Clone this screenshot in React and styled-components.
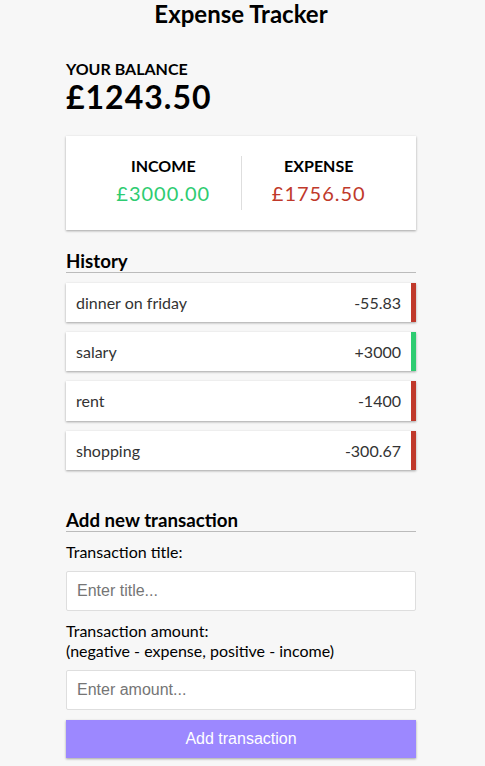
import React from 'react';
import styled, { createGlobalStyle } from 'styled-components';

const shadow = '0 1px 3px rgba(0, 0, 0, 0.12), 0 1px 2px rgba(0, 0, 0, 0.24)';

const GlobalStyle = createGlobalStyle`
  * {
    box-sizing: border-box;
  }
  body {
    margin: 0;
    padding: 0 3px 0 0;
    background-color: #f7f7f7;
    font-family: Lato, 'Noto Sans', sans-serif;
    color: #000;
  }
`;

const transactions = [
  { id: 1, text: 'dinner on friday', amount: '-55.83', plus: false },
  { id: 2, text: 'salary', amount: '+3000', plus: true },
  { id: 3, text: 'rent', amount: '-1400', plus: false },
  { id: 4, text: 'shopping', amount: '-300.67', plus: false },
];

const App = () => (
  <Page>
    <GlobalStyle />
    <Title>Expense Tracker</Title>
    <Container>
      <SmallHeading>Your Balance</SmallHeading>
      <Balance>£1243.50</Balance>

      <IncExp>
        <IncExpCol>
          <SmallHeading>Income</SmallHeading>
          <Money plus>£3000.00</Money>
        </IncExpCol>
        <IncExpCol>
          <SmallHeading>Expense</SmallHeading>
          <Money>£1756.50</Money>
        </IncExpCol>
      </IncExp>

      <SectionHeading>History</SectionHeading>
      <List>
        {transactions.map((t) => (
          <Item key={t.id} plus={t.plus}>
            {t.text}
            <span>{t.amount}</span>
          </Item>
        ))}
      </List>

      <SectionHeading>Add new transaction</SectionHeading>
      <form onSubmit={(e) => e.preventDefault()}>
        <FormControl>
          <Label htmlFor="text">Transaction title:</Label>
          <Input type="text" id="text" placeholder="Enter title..." />
        </FormControl>
        <FormControl>
          <Label htmlFor="amount">
            Transaction amount:
            <br />
            (negative - expense, positive - income)
          </Label>
          <Input type="number" id="amount" placeholder="Enter amount..." />
        </FormControl>
        <Button type="submit">Add transaction</Button>
      </form>
    </Container>
  </Page>
);

export default App;

const Page = styled.div`
  display: flex;
  flex-direction: column;
  align-items: center;
`;

const Title = styled.h2`
  margin: 0;
  font-size: 24px;
  line-height: 1.2;
  font-weight: 700;
`;

const Container = styled.div`
  width: 350px;
  margin: 30px auto 30px;
`;

const SmallHeading = styled.h4`
  margin: 0;
  font-size: 16px;
  font-weight: 700;
  line-height: 1.2;
  text-transform: uppercase;
`;

const Balance = styled.h1`
  margin: 0;
  font-size: 32px;
  font-weight: 700;
  line-height: 1.2;
  letter-spacing: 1px;
`;

const IncExp = styled.div`
  background-color: #fff;
  box-shadow: ${shadow};
  padding: 20px;
  display: flex;
  justify-content: space-between;
  margin: 20px 0;
`;

const IncExpCol = styled.div`
  flex: 1;
  text-align: center;

  &:first-of-type {
    border-right: 1px solid #dedede;
  }
`;

const Money = styled.p`
  font-size: 20px;
  letter-spacing: 1px;
  line-height: 1.2;
  margin: 5px 0;
  color: ${(p) => (p.plus ? '#2ecc71' : '#c0392b')};
`;

const SectionHeading = styled.h3`
  font-size: 18.72px;
  font-weight: 700;
  line-height: 1.2;
  border-bottom: 1px solid #bbb;
  padding-bottom: 0;
  margin: 20px 0 0;
`;

const List = styled.ul`
  list-style-type: none;
  padding: 0;
  margin: 10px 0 39px;
`;

const Item = styled.li`
  background-color: #fff;
  box-shadow: ${shadow};
  color: #333;
  display: flex;
  justify-content: space-between;
  padding: 10px;
  margin: 10px 0;
  font-size: 16px;
  line-height: 1.2;
  border-right: 5px solid ${(p) => (p.plus ? '#2ecc71' : '#c0392b')};

  &:last-child {
    margin-bottom: 0;
  }
`;

const FormControl = styled.div`
  line-height: 1.2;
`;

const Label = styled.label`
  display: block;
  margin: 10px 0;
  font-size: 16px;
  line-height: 1.2;
`;

const Input = styled.input`
  display: block;
  width: 100%;
  border: 1px solid #dedede;
  border-radius: 2px;
  font-family: 'Liberation Sans', Arial, sans-serif;
  font-size: 16px;
  padding: 10px;
  background: #fff;

  &::placeholder {
    color: #757575;
  }

  &::-webkit-outer-spin-button,
  &::-webkit-inner-spin-button {
    -webkit-appearance: none;
    margin: 0;
  }
`;

const Button = styled.button`
  cursor: pointer;
  display: block;
  width: 100%;
  background-color: #9c88ff;
  box-shadow: ${shadow};
  color: #fff;
  border: 0;
  font-family: 'Liberation Sans', Arial, sans-serif;
  font-size: 16px;
  margin: 10px 0 30px;
  padding: 10px;
`;
